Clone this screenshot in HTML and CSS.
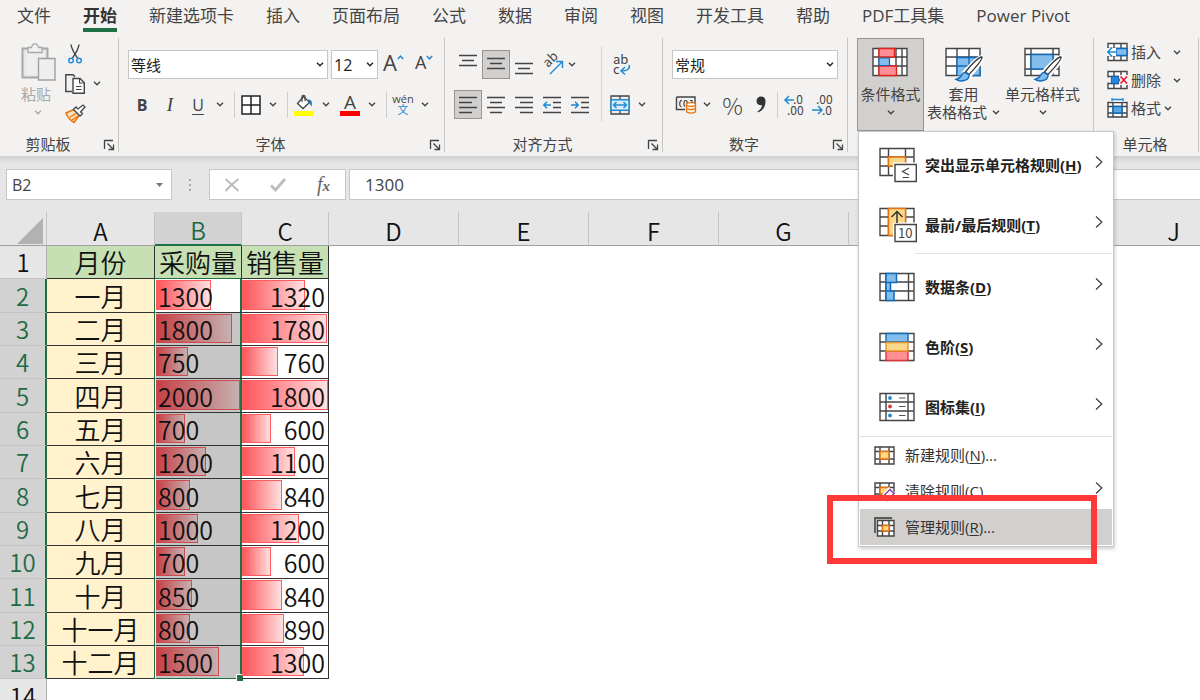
FILE: index.html
```html
<!DOCTYPE html>
<html lang="zh-CN">
<head>
<meta charset="utf-8">
<title>Excel</title>
<link rel="stylesheet" href="styles.css">
</head>
<body>
<svg class="defs" aria-hidden="true">
  <symbol id="chev" viewBox="0 0 8 5"><path d="M1 .8 4 3.8 7 .8" fill="none" stroke="currentColor" stroke-width="1.4"/></symbol>
  <symbol id="launch" viewBox="0 0 12 12"><path d="M1.5 10V1.5H10M4.5 4.5 10 10M10.5 5.5V10.5H5.5" fill="none" stroke="#444" stroke-width="1.3"/></symbol>
  <symbol id="more" viewBox="0 0 8 12"><path d="M1 .5 6.8 6 1 11.5" fill="none" stroke="#444" stroke-width="1.3"/></symbol>
</svg>

<header class="ribbon">
  <nav class="tabs">
    <button class="tab">文件</button>
    <button class="tab active">开始</button>
    <button class="tab">新建选项卡</button>
    <button class="tab">插入</button>
    <button class="tab">页面布局</button>
    <button class="tab">公式</button>
    <button class="tab">数据</button>
    <button class="tab">审阅</button>
    <button class="tab">视图</button>
    <button class="tab">开发工具</button>
    <button class="tab">帮助</button>
    <button class="tab">PDF工具集</button>
    <button class="tab">Power Pivot</button>
  </nav>

  <div class="groups">
    <section class="group">
      <div class="clip">
        <button class="paste">
          <svg width="36" height="38" viewBox="0 0 36 38"><path d="M2.500 5.500H27.500V34.500H2.500Z" fill="#e8e7e6" stroke="#a8a8a8" stroke-width="2"/><path d="M6 8H24V32H6Z" fill="#efeeed"/><path d="M8 9.500V4.500H11.500C12 2 13.500 .8 15 .8S18 2 18.500 4.500H22V9.500Z" fill="#f3f2f1" stroke="#a8a8a8" stroke-width="1.300"/><path d="M18.500 15.500H35V37H18.500Z" fill="#eee" stroke="#a0a0a0" stroke-width="1.400"/></svg>
          <span>粘贴</span>
          <svg class="chev"><use href="#chev"/></svg>
        </button>
        <div class="clip-side">
          <button class="mini" aria-label="剪切"><svg width="20" height="20" viewBox="0 0 20 20"><path d="M6 .5C6.500 5 9 9 12.500 14M14 .5C13.500 5 11 9 7.500 14" fill="none" stroke="#444" stroke-width="1.400"/><circle cx="6" cy="16.500" r="2.300" fill="none" stroke="#1e8bd4" stroke-width="1.400"/><circle cx="14" cy="16.500" r="2.300" fill="none" stroke="#1e8bd4" stroke-width="1.400"/></svg></button>
          <button class="mini" aria-label="复制"><svg width="20" height="20" viewBox="0 0 20 20"><path d="M7 17.500H.8V.8H8L10 2.800" fill="none" stroke="#444" stroke-width="1.400"/><path d="M8 4.500H15L19.300 8.800V19.300H8Z" fill="#fff" stroke="#444" stroke-width="1.400"/><path d="M14.500 4.500V9H19M11 12.500H16.500M11 15.500H16.500" fill="none" stroke="#444" stroke-width="1.100"/></svg><svg class="chev"><use href="#chev"/></svg></button>
          <button class="mini" aria-label="格式刷"><svg width="21" height="20" viewBox="0 0 21 20"><path d="M9 5.500 1 9C2.500 13 5.500 16.500 9 18.500L14.500 11Z" fill="#fde2bd" stroke="#e8730c" stroke-width="1.500"/><path d="M5 13 11 9.500M7 16 13 12" stroke="#e8730c" stroke-width="1.300"/><path d="M8.500 5.500 11 3 13 5 18 1 20 3 15.500 8 17.500 9.500 15 12Z" fill="#fff" stroke="#444" stroke-width="1.300"/></svg></button>
        </div>
      </div>
      <div class="foot"><span>剪贴板</span><svg class="launch"><use href="#launch"/></svg></div>
    </section>

    <section class="group">
      <div class="rows">
        <div class="row row-combo">
          <label class="combo combo-font"><select aria-label="字体"><option>等线</option></select><svg class="chev"><use href="#chev"/></svg></label>
          <label class="combo combo-size"><select aria-label="字号"><option>12</option></select><svg class="chev"><use href="#chev"/></svg></label>
          <button class="tool grow" aria-label="增大字号"><span class="a-big">A</span><svg width="7" height="5" viewBox="0 0 7 5"><path d="M.8 4 3.500 1 6.200 4" fill="none" stroke="#1e8bd4" stroke-width="1.500"/></svg></button>
          <button class="tool grow" aria-label="减小字号"><span class="a-small">A</span><svg width="7" height="5" viewBox="0 0 7 5"><path d="M.8 1 3.500 4 6.200 1" fill="none" stroke="#1e8bd4" stroke-width="1.500"/></svg></button>
        </div>
        <div class="row">
          <button class="sq bold">B</button><button class="sq ital">I</button><button class="sq under">U</button><svg class="chev wide"><use href="#chev"/></svg>
          <i class="sep"></i>
          <button class="tool" aria-label="边框"><svg width="20" height="20" viewBox="0 0 20 20"><path d="M1 1H19V19H1ZM10 1V19M1 10H19" fill="#fff" stroke="#222" stroke-width="1.500"/></svg><svg class="chev wide"><use href="#chev"/></svg></button>
          <i class="sep"></i>
          <button class="tool" aria-label="填充颜色"><svg width="20" height="22" viewBox="0 0 20 22"><path d="M9.500 2.500 15.500 8.500 9 14.500 3.500 9.500Z" fill="#fff" stroke="#444" stroke-width="1.300"/><path d="M8 8V2.500C8 .8 11 .8 11 2.500V7" fill="none" stroke="#444" stroke-width="1.200"/><path d="M14 5.500C17.500 5.500 18.500 8 17.500 12.500 16.500 11 15.500 10 15.500 8.500Z" fill="#1a6fb8"/><path d="M0 17H20V22H0Z" fill="#ff0"/></svg><svg class="chev wide"><use href="#chev"/></svg></button>
          <button class="tool after" aria-label="字体颜色"><span class="fcolor">A</span><svg class="chev wide"><use href="#chev"/></svg></button>
          <i class="sep"></i>
          <button class="tool" aria-label="拼音"><span class="wen"><span>wén</span><span class="wen-c">文</span></span><svg class="chev wide"><use href="#chev"/></svg></button>
        </div>
      </div>
      <div class="foot"><span>字体</span><svg class="launch"><use href="#launch"/></svg></div>
    </section>

    <section class="group">
      <div class="align">
        <div class="rows">
          <div class="row">
            <button class="sq" aria-label="顶端对齐"><svg width="18" height="22" viewBox="0 0 18 22"><path d="M0 1.500H18M3 6.500H15M0 11.500H18" stroke="#444" stroke-width="1.400"/></svg></button>
            <button class="sq on" aria-label="垂直居中"><svg width="18" height="22" viewBox="0 0 18 22"><path d="M0 4.500H18M3 9.500H15M0 14.500H18" stroke="#444" stroke-width="1.400"/></svg></button>
            <button class="sq" aria-label="底端对齐"><svg width="18" height="22" viewBox="0 0 18 22"><path d="M0 9.500H18M3 14.500H15M0 19.500H18" stroke="#444" stroke-width="1.400"/></svg></button>
            <button class="tool orient" aria-label="方向"><svg width="22" height="22" viewBox="0 0 22 22"><text x="0" y="0" transform="translate(6 14) rotate(-45)" font-size="13" fill="#444">ab</text><path d="M8 20 20 8M14 7.500H20.500V14" fill="none" stroke="#1e8bd4" stroke-width="1.400"/></svg><svg class="chev"><use href="#chev"/></svg></button>
          </div>
          <div class="row">
            <button class="sq on" aria-label="左对齐"><svg width="18" height="18" viewBox="0 0 18 18"><path d="M0 1.500H18M0 6.500H13M0 11.500H18M0 16.500H13" stroke="#444" stroke-width="1.400"/></svg></button>
            <button class="sq" aria-label="居中"><svg width="18" height="18" viewBox="0 0 18 18"><path d="M0 1.500H18M3 6.500H15M0 11.500H18M3 16.500H15" stroke="#444" stroke-width="1.400"/></svg></button>
            <button class="sq" aria-label="右对齐"><svg width="18" height="18" viewBox="0 0 18 18"><path d="M0 1.500H18M5 6.500H18M0 11.500H18M5 16.500H18" stroke="#444" stroke-width="1.400"/></svg></button>
            <button class="sq" aria-label="减少缩进"><svg width="18" height="18" viewBox="0 0 18 18"><path d="M0 1.500H18M10 6.500H18M10 11.500H18M0 16.500H18" stroke="#444" stroke-width="1.400"/><path d="M8 9H1M4 5.800.8 9 4 12.200" fill="none" stroke="#1e8bd4" stroke-width="1.500"/></svg></button>
            <button class="sq" aria-label="增加缩进"><svg width="18" height="18" viewBox="0 0 18 18"><path d="M0 1.500H18M10 6.500H18M10 11.500H18M0 16.500H18" stroke="#444" stroke-width="1.400"/><path d="M0 9H7M4 5.800 7.200 9 4 12.200" fill="none" stroke="#1e8bd4" stroke-width="1.500"/></svg></button>
          </div>
        </div>
        <i class="vline"></i>
        <div class="rows">
          <div class="row">
            <button class="sq wrap" aria-label="自动换行"><svg width="20" height="22" viewBox="0 0 20 22"><text x="1" y="10" font-size="13" fill="#444">ab</text><text x="1" y="20" font-size="13" fill="#444">c</text><path d="M17 11C18.500 15 15 17 9.500 17M13 13 9 17 13 20.500" fill="none" stroke="#1e8bd4" stroke-width="1.500"/></svg></button>
          </div>
          <div class="row">
            <button class="sq" aria-label="合并后居中"><svg width="20" height="20" viewBox="0 0 20 20"><path d="M1 1H19V19H1ZM10 1V19" fill="#eee" stroke="#444" stroke-width="1.300"/><path d="M1 4.800H19V15.200H1Z" fill="#d9ecfa" stroke="#1e8bd4" stroke-width="1.400"/><path d="M3.500 10H16.500M6.500 7 3.500 10 6.500 13M13.500 7 16.500 10 13.500 13" fill="none" stroke="#1e8bd4" stroke-width="1.400"/></svg></button><svg class="chev wide"><use href="#chev"/></svg>
          </div>
        </div>
      </div>
      <div class="foot"><span>对齐方式</span><svg class="launch"><use href="#launch"/></svg></div>
    </section>

    <section class="group">
      <div class="rows">
        <label class="combo"><select aria-label="数字格式"><option>常规</option></select><svg class="chev"><use href="#chev"/></svg></label>
        <div class="row num">
          <button class="tool" aria-label="会计数字格式"><svg width="22" height="18" viewBox="0 0 22 18"><path d="M1.500 1H20V9M10 13.500H1.500V1" fill="none" stroke="#444" stroke-width="1.400"/><path d="M7 4.500C4 4 4 11 6.500 10.500M10 10.500C8.500 10 8.500 4.500 10.500 4.500S12.500 6 12.500 8M15 4.500H17V7" fill="none" stroke="#444" stroke-width="1.200"/><path d="M11.500 8.500V15C11.500 17.800 20.500 17.800 20.500 15V8.500Z" fill="#fdf0e0" stroke="#e8730c" stroke-width="1.300"/><ellipse cx="16" cy="8.500" rx="4.500" ry="1.800" fill="#fff" stroke="#e8730c" stroke-width="1.300"/><path d="M11.500 11.800C12 14 20 14 20.500 11.800" fill="none" stroke="#e8730c" stroke-width="1.300"/></svg><svg class="chev wide"><use href="#chev"/></svg></button>
          <button class="sq pct">%</button>
          <button class="sq" aria-label="千位分隔样式"><svg width="10" height="17" viewBox="0 0 10 17"><path d="M5 .5C8 .5 9.500 2.500 9.500 5.500 9.500 10.500 7 14.500 2 16.500L1.500 15.500C4.500 13.500 6 11.500 6 9 2.500 10 .5 7.500 .5 5 .5 2.500 2.500 .5 5 .5Z" fill="#333"/></svg></button>
          <i class="sep"></i>
          <button class="dec" aria-label="增加小数位数"><svg width="22" height="22" viewBox="0 0 22 22"><text x="9" y="10" font-size="12">.0</text><text x="3" y="21" font-size="12">.00</text><path d="M10 6H1M5 2 1 6 5 10" fill="none" stroke="#1e8bd4" stroke-width="1.500"/></svg></button>
          <button class="dec" aria-label="减少小数位数"><svg width="22" height="22" viewBox="0 0 22 22"><text x="5" y="10" font-size="12">.00</text><text x="11" y="21" font-size="12">.0</text><path d="M1 16H11M7 12 11 16 7 20" fill="none" stroke="#1e8bd4" stroke-width="1.500"/></svg></button>
        </div>
      </div>
      <div class="foot"><span>数字</span><svg class="launch"><use href="#launch"/></svg></div>
    </section>

    <section class="group styles">
      <button class="big pressed">
        <svg width="38" height="34" viewBox="0 0 38 34"><path d="M1 1.500H35V28.500H1ZM1 10H35M1 19H35M7 1V29M24 1V29M30 1V29" fill="#fff" stroke="#444" stroke-width="1.400"/><path d="M7 1.500H22.500V10H7ZM7 19H24.500V28.500H7Z" fill="#ff8f95" stroke="#e0251c" stroke-width="1.400"/><path d="M7 11H17.500V18.500H7Z" fill="#83bdec" stroke="#1568b0" stroke-width="1.200"/></svg>
        <span>条件格式</span><svg class="chev"><use href="#chev"/></svg>
      </button>
      <button class="big">
        <svg width="38" height="34" viewBox="0 0 38 34"><path d="M1 1.500H35V28.500H1ZM1 10H35M1 19H35M12 1V29M24 1V29" fill="#fff" stroke="#444" stroke-width="1.400"/><path d="M12 10.500H35V28.500H12Z" fill="#83bdec"/><path d="M12 28.500V10.500H35M12 19H35M24 10V28M35 20V28.500H26" fill="none" stroke="#0f6cbd" stroke-width="1.400"/><path d="M37 10C38.500 13 30 22 24.500 29L19.500 25C25 19 34 9.500 37 10Z" fill="#fff" stroke="#fff" stroke-width="4"/><path d="M37 10C38 13 29 22 24 27.500L20.500 25C25 19 34 9.500 37 10Z" fill="#fff" stroke="#333" stroke-width="1.300"/><path d="M20 25.500C16 25.500 17.500 31 11 32.500 16 35.500 24.500 33.500 24 28Z" fill="#83bdec" stroke="#0f6cbd" stroke-width="1.400"/></svg>
        <span>套用</span><span class="line2">表格格式<svg class="chev"><use href="#chev"/></svg></span>
      </button>
      <button class="big">
        <svg width="38" height="34" viewBox="0 0 38 34"><path d="M1 1.500H35V28.500H1ZM1 7.500H35M1 22H35M7 1V29M29 1V29" fill="#fff" stroke="#444" stroke-width="1.400"/><path d="M7 7.500H29V22H7Z" fill="#83bdec" stroke="#0f6cbd" stroke-width="1.400"/><path d="M37 10C38.500 13 30 22 24.500 29L19.500 25C25 19 34 9.500 37 10Z" fill="#fff" stroke="#fff" stroke-width="4"/><path d="M37 10C38 13 29 22 24 27.500L20.500 25C25 19 34 9.500 37 10Z" fill="#fff" stroke="#333" stroke-width="1.300"/><path d="M20 25.500C16 25.500 17.500 31 11 32.500 16 35.500 24.500 33.500 24 28Z" fill="#83bdec" stroke="#0f6cbd" stroke-width="1.400"/></svg>
        <span>单元格样式</span><svg class="chev"><use href="#chev"/></svg>
      </button>
    </section>

    <section class="group">
      <div class="cells">
        <button class="cellbtn"><svg width="21" height="20" viewBox="0 0 21 20"><path d="M1 1.500H20V18.500H1ZM1 6.500H20M1 13.500H20M7 1V19M14 1V19" fill="#fff" stroke="#444" stroke-width="1.400"/><path d="M9 6.500H20V13.500H9Z" fill="#83bdec" stroke="#0f6cbd" stroke-width="1.400"/><path d="M0 6H9V14H0Z" fill="#fff"/><path d="M10 10H1M5 5.500 .8 10 5 14.500" fill="none" stroke="#1e8bd4" stroke-width="1.600"/></svg><span>插入</span><svg class="chev far"><use href="#chev"/></svg></button>
        <button class="cellbtn"><svg width="21" height="20" viewBox="0 0 21 20"><path d="M1 1.500H20V18.500H1ZM1 6.500H20M1 13.500H20M7 1V19M14 1V19" fill="#fff" stroke="#444" stroke-width="1.400"/><path d="M12 5H21V15H12ZM0 7.500H3V12.500H0Z" fill="#f3f2f1"/><path d="M4.500 6.500H10.500L12.500 10 10.500 13.500H4.500Z" fill="#2b88d8" stroke="#0f6cbd" stroke-width="1.300"/><path d="M13.500 6.500 20 13.500M20 6.500 13.500 13.500" stroke="#e81123" stroke-width="1.500"/></svg><span>删除</span><svg class="chev far"><use href="#chev"/></svg></button>
        <button class="cellbtn"><svg width="21" height="20" viewBox="0 0 21 20"><path d="M1 4.500H20V19H1ZM1 8.500H20M1 15H20M6 4V19M15 4V19" fill="#fff" stroke="#444" stroke-width="1.400"/><path d="M6 8.500H15V15H6Z" fill="#5aa7e4" stroke="#0f6cbd" stroke-width="1.400"/><path d="M3 0H18V4H3Z" fill="#f3f2f1"/><path d="M5 1.500H16M5 0V3.500M16 0V3.500" stroke="#1e8bd4" stroke-width="1.300"/></svg><span>格式</span><svg class="chev near"><use href="#chev"/></svg></button>
      </div>
      <div class="foot plain"><span>单元格</span></div>
    </section>
  </div>
</header>

<div class="formula">
  <label class="namebox"><input aria-label="名称框" value="B2"><svg width="7" height="4" viewBox="0 0 7 4"><path d="M0 0H7L3.500 4Z" fill="#777"/></svg></label>
  <svg class="dots" width="4" height="14" viewBox="0 0 4 14"><path d="M1 1H3V3H1ZM1 6H3V8H1ZM1 11H3V13H1Z" fill="#aaa"/></svg>
  <div class="fxbox">
    <button aria-label="取消"><svg width="16" height="14" viewBox="0 0 16 14"><path d="M1.500 1 14.500 13M14.500 1C9 5 5 9 1.500 13" fill="none" stroke="#bbb" stroke-width="1.900"/></svg></button>
    <button aria-label="输入"><svg width="16" height="14" viewBox="0 0 16 14"><path d="M1 7.500 5.500 12 15 1" fill="none" stroke="#bbb" stroke-width="2.800"/></svg></button>
    <button class="fx"><span class="f">f</span>x</button>
  </div>
  <input class="fvalue" aria-label="编辑栏" value="1300">
</div>

<main class="sheet">
<table class="grid">
  <colgroup><col class="c-head"><col class="c-a"><col class="c-bc"><col class="c-bc"><col class="c-x"><col class="c-x"><col class="c-x"><col class="c-x"><col class="c-x"><col class="c-x"><col class="c-x"></colgroup>
  <thead>
    <tr><th class="corner"><svg width="26" height="26" viewBox="0 0 26 26"><path d="M26 0V26H0Z" fill="#b2b2b2"/></svg></th><th>A</th><th class="sel">B</th><th>C</th><th>D</th><th>E</th><th>F</th><th>G</th><th>H</th><th>I</th><th>J</th></tr>
  </thead>
  <tbody>
    <tr class="title"><th>1</th><td>月份</td><td>采购量</td><td>销售量</td></tr>
    <tr class="d first"><th>2</th><td class="m">一月</td><td class="b"><div class="bar" style="width:65%"></div><span>1300</span></td><td class="c"><div class="bar" style="width:73.3%"></div><span>1320</span></td></tr>
    <tr class="d"><th>3</th><td class="m">二月</td><td class="b"><div class="bar" style="width:90%"></div><span>1800</span></td><td class="c"><div class="bar" style="width:98.9%"></div><span>1780</span></td></tr>
    <tr class="d"><th>4</th><td class="m">三月</td><td class="b"><div class="bar" style="width:37.5%"></div><span>750</span></td><td class="c"><div class="bar" style="width:42.2%"></div><span>760</span></td></tr>
    <tr class="d"><th>5</th><td class="m">四月</td><td class="b"><div class="bar" style="width:100%"></div><span>2000</span></td><td class="c"><div class="bar" style="width:100%"></div><span>1800</span></td></tr>
    <tr class="d"><th>6</th><td class="m">五月</td><td class="b"><div class="bar" style="width:35%"></div><span>700</span></td><td class="c"><div class="bar" style="width:33.3%"></div><span>600</span></td></tr>
    <tr class="d"><th>7</th><td class="m">六月</td><td class="b"><div class="bar" style="width:60%"></div><span>1200</span></td><td class="c"><div class="bar" style="width:61.1%"></div><span>1100</span></td></tr>
    <tr class="d"><th>8</th><td class="m">七月</td><td class="b"><div class="bar" style="width:40%"></div><span>800</span></td><td class="c"><div class="bar" style="width:46.7%"></div><span>840</span></td></tr>
    <tr class="d"><th>9</th><td class="m">八月</td><td class="b"><div class="bar" style="width:50%"></div><span>1000</span></td><td class="c"><div class="bar" style="width:66.7%"></div><span>1200</span></td></tr>
    <tr class="d"><th>10</th><td class="m">九月</td><td class="b"><div class="bar" style="width:35%"></div><span>700</span></td><td class="c"><div class="bar" style="width:33.3%"></div><span>600</span></td></tr>
    <tr class="d"><th>11</th><td class="m">十月</td><td class="b"><div class="bar" style="width:42.5%"></div><span>850</span></td><td class="c"><div class="bar" style="width:46.7%"></div><span>840</span></td></tr>
    <tr class="d"><th>12</th><td class="m">十一月</td><td class="b"><div class="bar" style="width:40%"></div><span>800</span></td><td class="c"><div class="bar" style="width:49.4%"></div><span>890</span></td></tr>
    <tr class="d last"><th>13</th><td class="m">十二月</td><td class="b"><div class="bar" style="width:75%"></div><span>1500</span><i class="handle"></i></td><td class="c"><div class="bar" style="width:72.2%"></div><span>1300</span></td></tr>
    <tr><th>14</th></tr>
  </tbody>
</table>
</main>

<div class="menu">
  <button class="item"><svg width="38" height="36" viewBox="0 0 38 36"><path d="M1 1.500H35V28.500H1ZM1 10H35M1 19H35M9.500 1V28M26.500 1V28" fill="#fff" stroke="#444" stroke-width="1.400"/><path d="M9.500 10H26.500V19H9.500Z" fill="#fbd88a" stroke="#e8730c" stroke-width="1.500"/><path d="M14 15.500H38V36H14Z" fill="#fff"/><path d="M16 17.500H37.300V34.500H16Z" fill="#fff" stroke="#444" stroke-width="1.400"/><path d="M30 21 23.500 24.500 30 28M23.500 30.500H30" fill="none" stroke="#444" stroke-width="1.200"/></svg><span>突出显示单元格规则(<u>H</u>)</span><svg class="more"><use href="#more"/></svg></button>
  <button class="item"><svg width="38" height="36" viewBox="0 0 38 36"><path d="M1 1.500H35V28.500H1ZM1 10H35M1 19H35M9.500 1V28M26.500 1V28" fill="#fff" stroke="#444" stroke-width="1.400"/><path d="M9.500 1.500H26.500V28.500H9.500Z" fill="#fbd88a" stroke="#e8730c" stroke-width="1.500"/><path d="M12.500 10 18 4.500 23.500 10" fill="none" stroke="#333" stroke-width="1.500"/><path d="M14 15.500H38V36H14Z" fill="#fff"/><path d="M18 4.500V16" stroke="#333" stroke-width="1.500"/><path d="M16 17.500H37.300V34.500H16Z" fill="#fff" stroke="#444" stroke-width="1.400"/><text x="19" y="31" font-size="13" font-weight="400">10</text></svg><span>最前/最后规则(<u>T</u>)</span><svg class="more"><use href="#more"/></svg></button>
  <hr class="inset">
  <button class="item"><svg width="38" height="30" viewBox="0 0 38 30"><path d="M1 1.500H35V28.500H1ZM1 10H35M1 19H35M7 1V28M29.500 1V28" fill="#fff" stroke="#444" stroke-width="1.400"/><path d="M7 1.500H17.500V10.500H11.500V19H15V28.500H7Z" fill="#83bdec" stroke="#0f6cbd" stroke-width="1.500"/><path d="M7 10.500H12M7 19H12" stroke="#0f6cbd" stroke-width="1.300"/></svg><span>数据条(<u>D</u>)</span><svg class="more"><use href="#more"/></svg></button>
  <button class="item"><svg width="38" height="30" viewBox="0 0 38 30"><path d="M1 1.500H35V28.500H1ZM1 10H35M1 19H35" fill="#fff" stroke="#444" stroke-width="1.400"/><path d="M7 1.500H29V10H7Z" fill="#83bdec" stroke="#0f6cbd" stroke-width="1.400"/><path d="M7 19H29V28.500H7Z" fill="#ff8f95" stroke="#e0353a" stroke-width="1.400"/><path d="M7 10.500H29V19H7Z" fill="#fbd88a" stroke="#e8912a" stroke-width="1.400"/></svg><span>色阶(<u>S</u>)</span><svg class="more"><use href="#more"/></svg></button>
  <button class="item"><svg width="38" height="30" viewBox="0 0 38 30"><path d="M1 1.500H35V28.500H1ZM1 10H35M1 19H35M7 1V28M29 1V28" fill="#fff" stroke="#444" stroke-width="1.400"/><circle cx="11" cy="6" r="1.900" fill="#1e8bd4"/><circle cx="11" cy="14.500" r="1.900" fill="#e83035"/><circle cx="11" cy="23.500" r="1.900" fill="#1e8bd4"/><path d="M20 6H26.500M20 14.500H26.500M20 23.500H26.500" stroke="#555" stroke-width="1.200"/></svg><span>图标集(<u>I</u>)</span><svg class="more"><use href="#more"/></svg></button>
  <hr class="full">
  <button class="item small"><svg width="21" height="19" viewBox="0 0 21 19"><path d="M1 1H20V18H1ZM1 5.500H20M1 13H20M6 1V18M15 1V18" fill="#fff" stroke="#444" stroke-width="1.400"/><path d="M6 5.500H15V13H6Z" fill="#fbd88a" stroke="#e8730c" stroke-width="1.500"/></svg><span>新建规则(<u>N</u>)...</span></button>
  <button class="item small"><svg width="21" height="19" viewBox="0 0 21 19"><path d="M1 1H20V17H1ZM1 5.500H20M1 12H20M6 1V17M15 1V17" fill="#fff" stroke="#444" stroke-width="1.400"/><path d="M6 5.500H15V12H6Z" fill="#fbd88a" stroke="#e8730c" stroke-width="1.500"/><path d="M15 5 21 11V19H7V14Z" fill="#fff"/><path d="M16 7.500 20 11.500 13.500 18.500 9 14.500Z" fill="#fff" stroke="#8b3fa8" stroke-width="1.500"/></svg><span>清除规则(<u>C</u>)</span><svg class="more"><use href="#more"/></svg></button>
  <button class="item small hover"><svg width="21" height="20" viewBox="0 0 21 20"><path d="M1 16V1H18" fill="none" stroke="#333" stroke-width="1.400"/><path d="M3.500 3.500H20V19H3.500ZM3.500 8.500H20M3.500 14H20M8.500 3.500V19M15 3.500V19" fill="#fff" stroke="#444" stroke-width="1.400"/><path d="M8.500 8.500H15V14H8.500Z" fill="#fbd88a" stroke="#e8730c" stroke-width="1.500"/></svg><span>管理规则(<u>R</u>)...</span></button>
</div>
<div class="marker"></div>
</body>
</html>
```

FILE: styles.css
```css
* { box-sizing: border-box; }
body {
  margin: 0;
  height: 100vh;
  overflow: hidden;
  display: flex;
  flex-direction: column;
  position: relative;
  background: #fff;
  color: #444;
  font: 15px/18px "Open Sans", "Noto Sans CJK SC", sans-serif;
}
button, input, select { font: inherit; color: inherit; background: none; border: 0; padding: 0; margin: 0; border-radius: 0; }
select { appearance: none; }
svg { flex: none; display: block; overflow: visible; }
svg text { fill: #444; font-family: "Noto Sans CJK SC", sans-serif; }
.defs { position: absolute; width: 0; height: 0; }
.chev { width: 8px; height: 5px; }
.chev.wide { width: 16px; }
.launch { width: 12px; height: 12px; }

/* ribbon */
.ribbon { background: #f3f2f1; border-bottom: 1px solid #d0d0d0; flex: none; }
.tabs { display: flex; gap: 32px; padding: 0 17px; height: 38px; align-items: flex-start; font-size: 17px; }
.tab { height: 32px; line-height: 24px; padding-top: 4px; white-space: nowrap; border-bottom: 4px solid transparent; }
.tab.active { font-weight: bold; border-color: #1e7145; color: #333; }
.groups { display: grid; grid-template-columns: 119px 326px 218px 185px 246px 105px; height: 118px; }
.group { display: flex; flex-direction: column; border-right: 1px solid #c8c6c4; margin: 0 0 4px; padding: 12px 9px 0; }
.foot { margin-top: auto; display: flex; align-items: center; height: 22px; margin-bottom: -3px; }
.foot span { flex: 1; text-align: center; padding-right: 22px; }
.foot.plain span { padding-right: 2px; }
.foot .launch { margin: 2px -6px 0 -6px; }
.rows { display: flex; flex-direction: column; gap: 11px; }
.row { display: flex; align-items: center; height: 29px; }
.row-combo { gap: 3px; }
.combo { display: grid; align-items: center; height: 29px; background: #fff; border: 1px solid #c8c6c4; color: #222; }
.combo > * { grid-area: 1 / 1; }
.combo select { height: 27px; padding: 0 2px; width: 100%; }
.combo .chev { justify-self: end; margin-right: 3px; pointer-events: none; }
.combo-font { width: 200px; flex: none; }
.combo-size { width: 47px; flex: none; }
.combo-size select { font-size: 16px; }
.sq { width: 28px; height: 29px; display: flex; align-items: center; justify-content: center; }
.on { background: #d2d0ce; border: 1px solid #979593; }
.tool { display: flex; align-items: center; gap: 4px; }
.after { margin-left: 6px; }
.sep { width: 1px; height: 26px; background: #d0cecc; margin: 0 6px; flex: none; }
.bold { font-weight: bold; font-size: 16px; }
.ital { font: italic 19px "Liberation Serif", serif; }
.under { text-decoration: underline; font-size: 16px; text-underline-offset: 3px; }
.grow { gap: 0; align-items: flex-start; width: 28px; height: 24px; flex: none; }
.grow svg { margin-top: 2px; }
.a-big { font-size: 22px; margin-left: 2px; }
.a-small { font-size: 18px; margin-left: 3px; }
.fcolor { width: 20px; font-size: 19px; line-height: 17px; border-bottom: 5px solid #f00; text-align: center; }
.wen { width: 20px; font-size: 11px; line-height: 10px; display: flex; flex-direction: column; align-items: center; }
.wen-c { color: #1e8bd4; line-height: 12px; }

.clip { display: flex; gap: 8px; padding-left: 10px; margin-top: -7px; }
.paste { display: flex; flex-direction: column; align-items: center; gap: 4px; color: #a8a8a8; width: 38px; }
.paste span { margin-right: 4px; }
.paste .chev { margin-top: 3px; }
.clip-side { display: flex; flex-direction: column; gap: 9px; }
.mini { display: flex; align-items: center; gap: 8px; height: 21px; }

.align { display: flex; }
.vline { width: 1px; height: 76px; background: #d8d6d4; margin: -4px 4px 0 7px; }
.orient { margin-left: 4px; }
.wrap { width: 32px; }
.num { padding-left: 3px; }
.num .sep { margin: 0 6px 0 2px; }
.num .tool { gap: 2px; }
.pct { font: 300 23px "Noto Sans CJK SC", sans-serif; margin-left: 2px; width: 32px; }
.dec { width: 28px; }
.dec text { font-size: 12px; }

.styles { flex-direction: row; align-items: flex-start; padding: 0 0 0 9px; }
.big { display: flex; flex-direction: column; align-items: center; width: 67px; height: 93px; padding-top: 8px; white-space: nowrap; border: 1px solid transparent; }
.big + .big { width: 79px; }
.big > span:first-of-type { margin-top: 4px; }
.big > .chev { margin-top: 7px; }
.line2 { display: flex; align-items: center; gap: 5px; }
.pressed { background: #d2d0ce; border-color: #979593; }

.cells { display: flex; flex-direction: column; gap: 8px; padding-left: 4px; margin-top: -8px; }
.cellbtn { display: flex; align-items: center; gap: 3px; height: 20px; white-space: nowrap; }
.cellbtn .far { margin-left: 9px; }

/* formula bar */
.formula { flex: none; display: flex; align-items: center; height: 55px; padding: 0 0 0 6px; background: linear-gradient(#d4d4d4, #e6e6e6 6px); }
.namebox { width: 166px; height: 31px; display: grid; align-items: center; background: #fff; border: 1px solid #c6c6c6; }
.namebox > * { grid-area: 1 / 1; }
.namebox input { width: 100%; padding-left: 5px; font-size: 16px; }
.namebox svg { justify-self: end; margin-right: 8px; }
.dots { margin: 0 18px 0 16px; }
.fxbox { width: 137px; height: 31px; margin: 0 3px 0 -1px; padding: 0 15px 0 14px; display: flex; justify-content: space-between; align-items: center; background: #fff; border: 1px solid #c6c6c6; }
.fx { font: italic bold 15px "Liberation Serif", serif; color: #666; }
.f { font-size: 20px; font-weight: normal; }
.fvalue { flex: 1; min-width: 0; height: 31px; padding-left: 15px; font-size: 17px; background: #fff; border: 1px solid #c6c6c6; border-right: 0; }

/* worksheet */
.sheet { flex: 1; min-height: 0; overflow: hidden; }
.grid { border-collapse: separate; border-spacing: 0; table-layout: fixed; width: max-content; height: 501px; font: 350 24px/28px "Noto Sans CJK SC", sans-serif; color: #111; }
.c-head { width: 47px; }
.c-a { width: 108px; }
.c-bc { width: 87px; }
.c-x { width: 130px; }
.grid th, .grid td { padding: 0; font-weight: 350; white-space: nowrap; text-align: center; }
thead th { height: 33px; background: #e6e6e6; border-right: 1px solid #c4c4c4; border-bottom: 1px solid #a0a0a0; }
.grid thead th { padding-top: 4px; }
thead .sel { background: #d2d2d2; color: #1e6b45; border-bottom: 2px solid #1e7145; }
.corner svg { margin: 0 3px 0 auto; }
tbody th { background: #e6e6e6; border-right: 1px solid #b0b0b0; border-bottom: 1px solid #c4c4c4; }
tbody td { border-right: 1px solid #333; border-bottom: 1px solid #333; position: relative; }
.title td { background: #c6e0b4; font-size: 26px; }
.title td:nth-child(3) { border-bottom: 1px solid #1e7145; }
.d th { background: #d2d2d2; color: #1e6b45; border-right: 2px solid #1e7145; }
.grid .m { background: #fff2cc; font-size: 26px; border-right-color: #1e7145; }
.grid .b { background: #c6c6c6; border-right: 2px solid #1e7145; border-left: 1px solid #fff; text-align: left; }
.first .b { background: #fff; }
.last .b { border-bottom-color: #1e7145; }
.grid .c { text-align: right; }
.b, .c { isolation: isolate; font-size: 25px; }
.b span { margin-left: 2px; }
.c span { margin-right: 3px; }
.bar { position: absolute; z-index: -1; left: 0; top: 1px; bottom: 2px; border: 1px solid #ff5c60; background: linear-gradient(90deg, #ff555a, #ffe0e1); }
.b .bar { border-color: #cf4a4e; background: linear-gradient(90deg, #c64146, #c6b0b0); }
.first .b .bar { border-color: #ff5c60; background: linear-gradient(90deg, #ff555a, #ffe0e1); }
.handle { position: absolute; right: -3px; bottom: -3px; width: 6px; height: 6px; background: #1e7145; outline: 1px solid #fff; z-index: 2; }

/* drop-down menu */
.menu { position: absolute; left: 858px; top: 131px; width: 256px; padding: 3px 1px 1px; background: #fff; border: 1px solid #c6c6c6; box-shadow: 1px 2px 4px rgba(0, 0, 0, .2); color: #222; }
.item { display: flex; align-items: center; width: 100%; height: 60px; padding: 0 9px 0 19px; gap: 8px; font-weight: bold; text-align: left; white-space: nowrap; }
.item > span { flex: 1; }
.item .more { width: 8px; height: 12px; margin-top: -6px; }
.item u { text-underline-offset: 2px; }
.item.small { height: 36px; padding-left: 14px; gap: 10px; font-weight: normal; color: #333; }
.hover { background: #d2d0ce; }
.menu hr { margin: 0; border: 0; height: 1px; background: #e1e1e1; }
.menu .inset { margin: -2px 0 3px 55px; }
.menu .full { margin-top: -1px; }
.marker { position: absolute; left: 827px; top: 495px; width: 270px; height: 69px; border: 6px solid #ff3838; pointer-events: none; }
```
